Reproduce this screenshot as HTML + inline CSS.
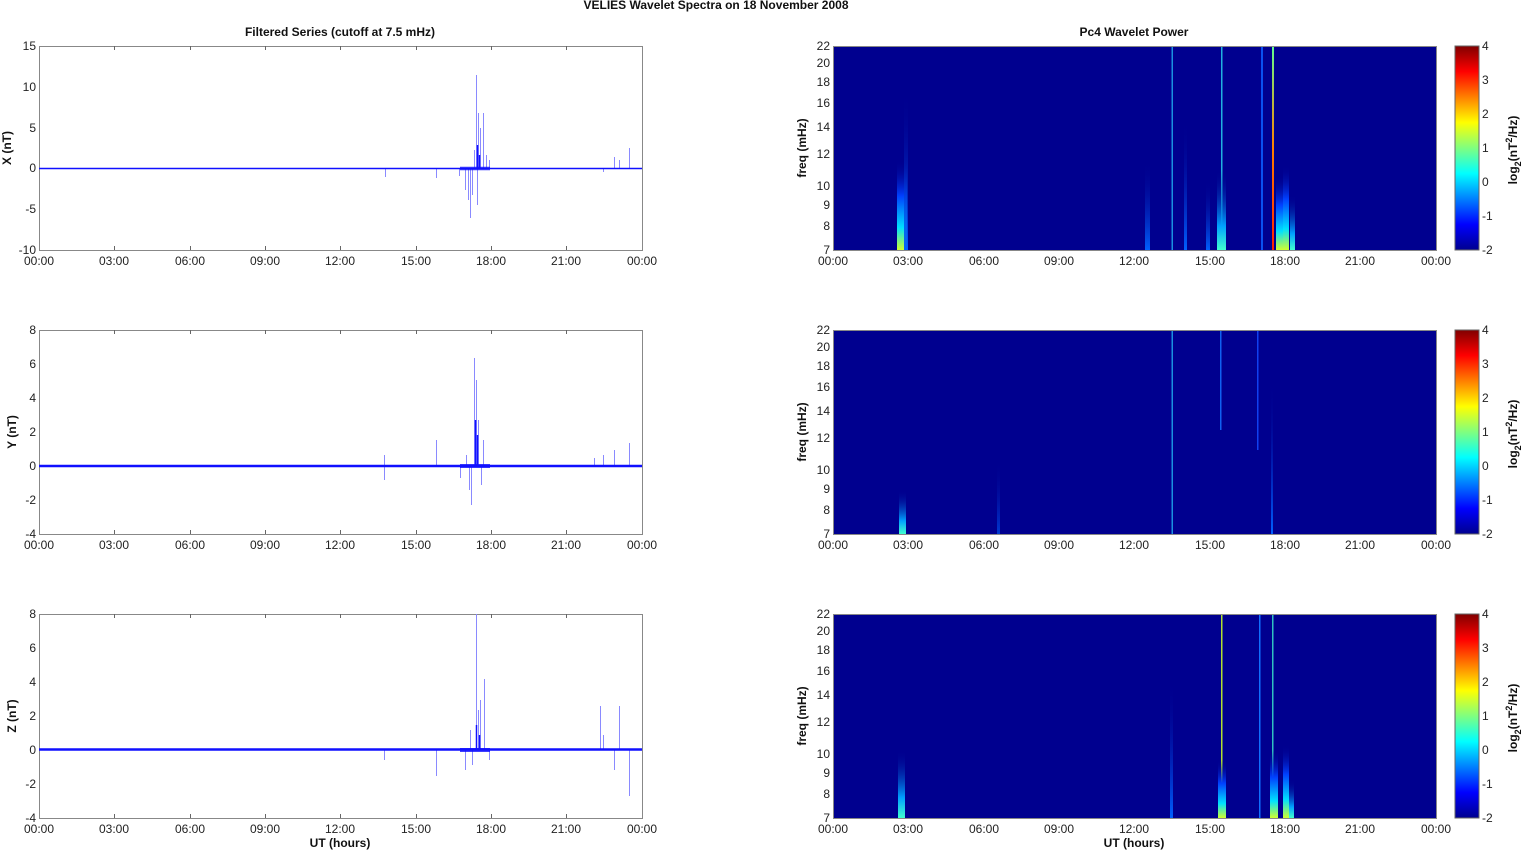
<!DOCTYPE html>
<html><head><meta charset="utf-8"><style>
html,body{margin:0;padding:0;background:#fff;}
svg{display:block;font-family:"Liberation Sans",Arial,sans-serif;}
.t{font-size:12px;fill:#222;}
.b{font-size:12px;font-weight:bold;fill:#111;}
</style></head><body>
<svg width="1522" height="851" viewBox="0 0 1522 851" xmlns="http://www.w3.org/2000/svg">
<defs>
<linearGradient id="jet" x1="0" y1="1" x2="0" y2="0">
<stop offset="0" stop-color="#00008f"/><stop offset="0.125" stop-color="#0000ff"/><stop offset="0.375" stop-color="#00ffff"/><stop offset="0.625" stop-color="#ffff00"/><stop offset="0.875" stop-color="#ff0000"/><stop offset="1" stop-color="#800000"/>
</linearGradient>
<linearGradient id="gY" x1="0" y1="1" x2="0" y2="0"><stop offset="0" stop-color="#d0ff30"/><stop offset="0.25" stop-color="#00e0ff"/><stop offset="0.6" stop-color="#0040ff"/><stop offset="1" stop-color="#00008f" stop-opacity="0"/></linearGradient>
<linearGradient id="gC" x1="0" y1="1" x2="0" y2="0"><stop offset="0" stop-color="#40ffd0"/><stop offset="0.3" stop-color="#00a0ff"/><stop offset="1" stop-color="#00008f" stop-opacity="0"/></linearGradient>
<linearGradient id="gB" x1="0" y1="1" x2="0" y2="0"><stop offset="0" stop-color="#0060ff"/><stop offset="1" stop-color="#00008f" stop-opacity="0"/></linearGradient>
<linearGradient id="gR" x1="0" y1="1" x2="0" y2="0"><stop offset="0" stop-color="#ff2000"/><stop offset="0.5" stop-color="#ff8000"/><stop offset="1" stop-color="#60ff90"/></linearGradient>
</defs>
<text x="716" y="9" class="b" text-anchor="middle" font-size="11">VELIES Wavelet Spectra on 18 November  2008</text>
<text x="340" y="36" class="b" text-anchor="middle">Filtered Series (cutoff at 7.5 mHz)</text>
<text x="1134" y="36" class="b" text-anchor="middle">Pc4 Wavelet Power</text>

<g>
<rect x="39.5" y="46.5" width="603" height="204" fill="#fff" stroke="#888"/>
<rect x="39.5" y="330.5" width="603" height="204" fill="#fff" stroke="#888"/>
<rect x="39.5" y="614.5" width="603" height="204" fill="#fff" stroke="#888"/>
<g stroke="#666" stroke-width="1">
<path d="M114.5 46v4M190.5 46v4M265.5 46v4M340.5 46v4M416.5 46v4M491.5 46v4M566.5 46v4M114.5 250v-4M190.5 250v-4M265.5 250v-4M340.5 250v-4M416.5 250v-4M491.5 250v-4M566.5 250v-4"/>
<path d="M114.5 330v4M190.5 330v4M265.5 330v4M340.5 330v4M416.5 330v4M491.5 330v4M566.5 330v4M114.5 534v-4M190.5 534v-4M265.5 534v-4M340.5 534v-4M416.5 534v-4M491.5 534v-4M566.5 534v-4"/>
<path d="M114.5 614v4M190.5 614v4M265.5 614v4M340.5 614v4M416.5 614v4M491.5 614v4M566.5 614v4M114.5 818v-4M190.5 818v-4M265.5 818v-4M340.5 818v-4M416.5 818v-4M491.5 818v-4M566.5 818v-4"/>
</g>
<g stroke="#8a8aff" stroke-width="1">
<path d="M476.5 168V75M478.5 168V113M483.5 168V113M480.5 168V128M474.5 168V150M486.5 168V155M470.5 168V218M468.5 168V200M465.5 168V190M472.5 168V195M477.5 168V205M489.5 168V160M385.5 168V177M436.5 168V178M459.5 168V176M614.5 168V157M629.5 168V148M603.5 168V172M619.5 168V160"/>
</g>
<path d="M39 168.5H642" stroke="#1010ff" stroke-width="1.6"/>
<path d="M460 168.5h30" stroke="#1010ff" stroke-width="3.5" opacity="0.8"/>
<path d="M477.5 168V145M479.5 168V155" stroke="#1010ff" stroke-width="1.5"/>
<g stroke="#8a8aff" stroke-width="1">
<path d="M474.5 466V358M476.5 466V380M478.5 466V420M471.5 466V505M469.5 466V490M481.5 466V485M436.5 466V440M384.5 466V455M384.5 466V480M483.5 466V440M466.5 466V455M603.5 466V455M614.5 466V450M629.5 466V443M594.5 466V458M460.5 466V478"/>
</g>
<path d="M39 466H642" stroke="#1010ff" stroke-width="2.5"/>
<path d="M460 466h30" stroke="#1010ff" stroke-width="4" opacity="0.8"/>
<path d="M475.5 466V420M477.5 466V435" stroke="#1010ff" stroke-width="1.5"/>
<g stroke="#8a8aff" stroke-width="1">
<path d="M476.5 750V614M484.5 750V679M480.5 750V700M478.5 750V710M436.5 750V776M465.5 750V770M472.5 750V765M489.5 750V760M600.5 750V706M619.5 750V706M629.5 750V796M384.5 750V760M470.5 750V730M603.5 750V735M614.5 750V770"/>
</g>
<path d="M39 749.5H642" stroke="#1010ff" stroke-width="2.5"/>
<path d="M460 750h30" stroke="#1010ff" stroke-width="4" opacity="0.8"/>
<path d="M476.5 750V725M479.5 750V735" stroke="#1010ff" stroke-width="1.5"/>
<g class="t" text-anchor="end">
<text x="36" y="50">15</text><text x="36" y="91">10</text><text x="36" y="132">5</text><text x="36" y="172">0</text><text x="36" y="213">-5</text><text x="36" y="254">-10</text>
<text x="36" y="334">8</text><text x="36" y="368">6</text><text x="36" y="402">4</text><text x="36" y="436">2</text><text x="36" y="470">0</text><text x="36" y="504">-2</text><text x="36" y="538">-4</text>
<text x="36" y="618">8</text><text x="36" y="652">6</text><text x="36" y="686">4</text><text x="36" y="720">2</text><text x="36" y="754">0</text><text x="36" y="788">-2</text><text x="36" y="822">-4</text>
</g>
<text class="b" transform="translate(11,148) rotate(-90)" text-anchor="middle">X (nT)</text>
<text class="b" transform="translate(16,432) rotate(-90)" text-anchor="middle">Y (nT)</text>
<text class="b" transform="translate(16,716) rotate(-90)" text-anchor="middle">Z (nT)</text>
<g class="t" text-anchor="middle">
<text x="39" y="265">00:00</text><text x="114" y="265">03:00</text><text x="190" y="265">06:00</text><text x="265" y="265">09:00</text><text x="340" y="265">12:00</text><text x="416" y="265">15:00</text><text x="491" y="265">18:00</text><text x="566" y="265">21:00</text><text x="642" y="265">00:00</text>
<text x="39" y="549">00:00</text><text x="114" y="549">03:00</text><text x="190" y="549">06:00</text><text x="265" y="549">09:00</text><text x="340" y="549">12:00</text><text x="416" y="549">15:00</text><text x="491" y="549">18:00</text><text x="566" y="549">21:00</text><text x="642" y="549">00:00</text>
<text x="39" y="833">00:00</text><text x="114" y="833">03:00</text><text x="190" y="833">06:00</text><text x="265" y="833">09:00</text><text x="340" y="833">12:00</text><text x="416" y="833">15:00</text><text x="491" y="833">18:00</text><text x="566" y="833">21:00</text><text x="642" y="833">00:00</text>
</g>
<text x="340" y="847" class="b" text-anchor="middle">UT (hours)</text>
</g>

<g>
<rect x="833" y="46" width="603" height="204" fill="#00008f"/>
<rect x="833" y="330" width="603" height="204" fill="#00008f"/>
<rect x="833" y="614" width="603" height="204" fill="#00008f"/>
<rect x="897" y="160" width="10" height="90" fill="url(#gY)"/>
<rect x="904" y="90" width="4" height="160" fill="url(#gB)"/>
<rect x="1171.5" y="46" width="1.5" height="204" fill="#1a90e0"/>
<rect x="1221" y="46" width="1.5" height="204" fill="#20b0e0"/>
<rect x="1217" y="170" width="9" height="80" fill="url(#gC)"/>
<rect x="1145" y="160" width="5" height="90" fill="url(#gB)"/>
<rect x="1184" y="120" width="3" height="130" fill="url(#gB)"/>
<rect x="1206" y="180" width="4" height="70" fill="url(#gB)"/>
<rect x="1261" y="46" width="2" height="204" fill="#0a50f0"/>
<rect x="1272" y="46" width="2" height="204" fill="url(#gR)"/>
<rect x="1276" y="175" width="7" height="75" fill="url(#gY)"/>
<rect x="1283" y="165" width="6" height="85" fill="url(#gY)"/>
<rect x="1290" y="195" width="5" height="55" fill="url(#gC)"/>
<rect x="899" y="490" width="7" height="44" fill="url(#gC)"/>
<rect x="1171.5" y="330" width="1.5" height="204" fill="#1a90e0"/>
<rect x="1220" y="330" width="1.5" height="100" fill="#1060f0"/>
<rect x="1257" y="330" width="1.5" height="120" fill="#1040f0"/>
<rect x="1271" y="380" width="2" height="154" fill="url(#gB)"/>
<rect x="997" y="460" width="3" height="74" fill="url(#gB)" opacity="0.6"/>
<rect x="898" y="750" width="7" height="68" fill="url(#gC)"/>
<rect x="1221" y="614" width="1.5" height="204" fill="#b0e030"/>
<rect x="1218" y="760" width="8" height="58" fill="url(#gY)"/>
<rect x="1259" y="614" width="1.5" height="204" fill="#1070ff"/>
<rect x="1272" y="614" width="1.5" height="204" fill="#30c0c0"/>
<rect x="1270" y="750" width="8" height="68" fill="url(#gY)"/>
<rect x="1283" y="745" width="6" height="73" fill="url(#gY)"/>
<rect x="1289" y="780" width="5" height="38" fill="url(#gC)"/>
<rect x="1170" y="680" width="3" height="138" fill="url(#gB)"/>
<g fill="none" stroke="#888"><rect x="833.5" y="46.5" width="603" height="204"/><rect x="833.5" y="330.5" width="603" height="204"/><rect x="833.5" y="614.5" width="603" height="204"/></g>
<rect x="1455" y="46" width="24" height="204" fill="url(#jet)" stroke="#666"/>
<rect x="1455" y="330" width="24" height="204" fill="url(#jet)" stroke="#666"/>
<rect x="1455" y="614" width="24" height="204" fill="url(#jet)" stroke="#666"/>
<g class="t">
<text x="1482" y="50">4</text><text x="1482" y="84">3</text><text x="1482" y="118">2</text><text x="1482" y="152">1</text><text x="1482" y="186">0</text><text x="1482" y="220">-1</text><text x="1482" y="254">-2</text>
<text x="1482" y="334">4</text><text x="1482" y="368">3</text><text x="1482" y="402">2</text><text x="1482" y="436">1</text><text x="1482" y="470">0</text><text x="1482" y="504">-1</text><text x="1482" y="538">-2</text>
<text x="1482" y="618">4</text><text x="1482" y="652">3</text><text x="1482" y="686">2</text><text x="1482" y="720">1</text><text x="1482" y="754">0</text><text x="1482" y="788">-1</text><text x="1482" y="822">-2</text>
</g>
<text class="b" transform="translate(1517,150) rotate(-90)" text-anchor="middle">log<tspan font-size="9" dy="4">2</tspan><tspan dy="-4">(nT</tspan><tspan font-size="9" dy="-5">2</tspan><tspan dy="5">/Hz)</tspan></text>
<text class="b" transform="translate(1517,434) rotate(-90)" text-anchor="middle">log<tspan font-size="9" dy="4">2</tspan><tspan dy="-4">(nT</tspan><tspan font-size="9" dy="-5">2</tspan><tspan dy="5">/Hz)</tspan></text>
<text class="b" transform="translate(1517,718) rotate(-90)" text-anchor="middle">log<tspan font-size="9" dy="4">2</tspan><tspan dy="-4">(nT</tspan><tspan font-size="9" dy="-5">2</tspan><tspan dy="5">/Hz)</tspan></text>
<g class="t" text-anchor="end">
<text x="830" y="50">22</text><text x="830" y="67">20</text><text x="830" y="86">18</text><text x="830" y="107">16</text><text x="830" y="131">14</text><text x="830" y="158">12</text><text x="830" y="190">10</text><text x="830" y="209">9</text><text x="830" y="230">8</text><text x="830" y="254">7</text>
<text x="830" y="334">22</text><text x="830" y="351">20</text><text x="830" y="370">18</text><text x="830" y="391">16</text><text x="830" y="415">14</text><text x="830" y="442">12</text><text x="830" y="474">10</text><text x="830" y="493">9</text><text x="830" y="514">8</text><text x="830" y="538">7</text>
<text x="830" y="618">22</text><text x="830" y="635">20</text><text x="830" y="654">18</text><text x="830" y="675">16</text><text x="830" y="699">14</text><text x="830" y="726">12</text><text x="830" y="758">10</text><text x="830" y="777">9</text><text x="830" y="798">8</text><text x="830" y="822">7</text>
</g>
<text class="b" transform="translate(806,148) rotate(-90)" text-anchor="middle">freq (mHz)</text>
<text class="b" transform="translate(806,432) rotate(-90)" text-anchor="middle">freq (mHz)</text>
<text class="b" transform="translate(806,716) rotate(-90)" text-anchor="middle">freq (mHz)</text>
<g class="t" text-anchor="middle">
<text x="833" y="265">00:00</text><text x="908" y="265">03:00</text><text x="984" y="265">06:00</text><text x="1059" y="265">09:00</text><text x="1134" y="265">12:00</text><text x="1210" y="265">15:00</text><text x="1285" y="265">18:00</text><text x="1360" y="265">21:00</text><text x="1436" y="265">00:00</text>
<text x="833" y="549">00:00</text><text x="908" y="549">03:00</text><text x="984" y="549">06:00</text><text x="1059" y="549">09:00</text><text x="1134" y="549">12:00</text><text x="1210" y="549">15:00</text><text x="1285" y="549">18:00</text><text x="1360" y="549">21:00</text><text x="1436" y="549">00:00</text>
<text x="833" y="833">00:00</text><text x="908" y="833">03:00</text><text x="984" y="833">06:00</text><text x="1059" y="833">09:00</text><text x="1134" y="833">12:00</text><text x="1210" y="833">15:00</text><text x="1285" y="833">18:00</text><text x="1360" y="833">21:00</text><text x="1436" y="833">00:00</text>
</g>
<text x="1134" y="847" class="b" text-anchor="middle">UT (hours)</text>
</g>
</svg>
</body></html>
